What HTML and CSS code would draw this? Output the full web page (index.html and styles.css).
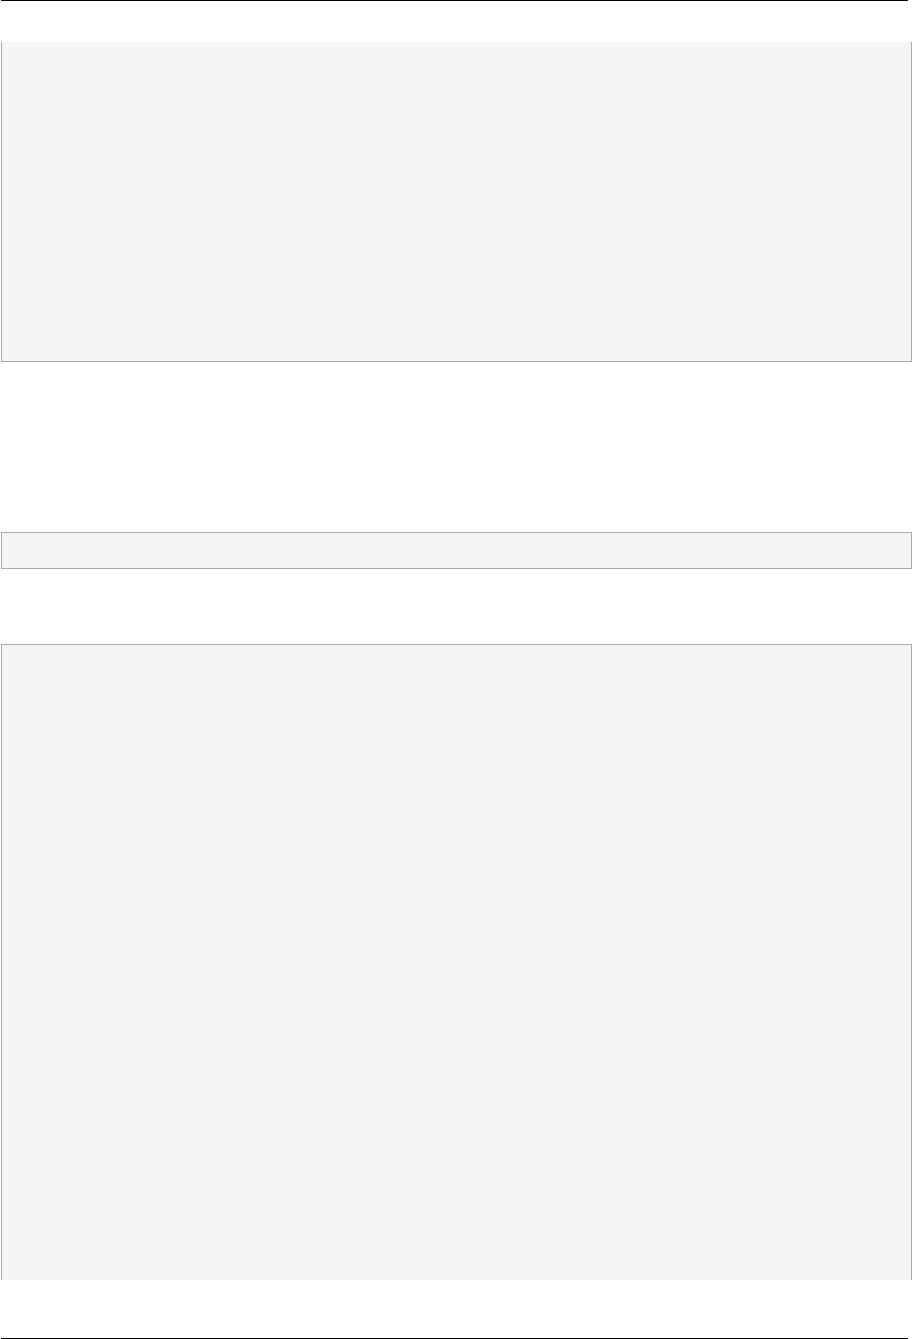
FILE: index.html
```html
<!DOCTYPE html>
<html>
<head>
<meta charset="utf-8">
<link rel="stylesheet" href="styles.css">
</head>
<body>
<div class="page">
  <div class="rule"></div>
  <div class="block block-cont"></div>
  <div class="block block-short"></div>
  <div class="block block-open"></div>
  <div class="rule rule-bottom"></div>
</div>
</body>
</html>
```

FILE: styles.css
```css
html, body {
  margin: 0;
  padding: 0;
  background: #ffffff;
  font-family: "Liberation Sans", Arial, sans-serif;
}
.page {
  width: 912px;
  height: 1339px;
  display: flex;
  flex-direction: column;
  padding-left: 1px;
  box-sizing: border-box;
}
.rule {
  width: 907px;
  height: 1px;
  background: #000000;
  flex: none;
}
.block {
  background: #f5f5f5;
  border: 1px solid #aaaaaa;
  box-sizing: border-box;
  width: 911px;
  flex: none;
}
.block-cont {
  border-top: none;
  margin-top: 41px;
  height: 320px;
}
.block-short {
  margin-top: 170px;
  height: 37px;
}
.block-open {
  border-bottom: none;
  margin-top: 75px;
  height: 636px;
}
.rule-bottom {
  margin-top: 58px;
}
```
